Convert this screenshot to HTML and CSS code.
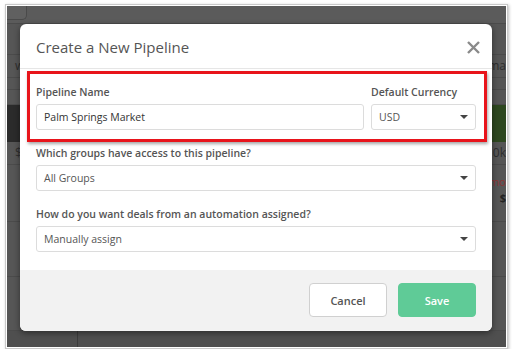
FILE: index.html
```html
<!DOCTYPE html>
<html lang="en">
<head>
    <meta charset="UTF-8">
    <meta name="viewport" content="width=device-width, initial-scale=1.0">
    <title>Create a New Pipeline</title>
    <link rel="stylesheet" href="styles.css">
</head>
<body>
    <div class="shot">
        <div class="backdrop">
            <div class="bg-row bg-top"><span class="bg-tab"></span></div>
            <div class="bg-row bg-b"></div>
            <div class="bg-row bg-c"><span>wn</span><span>ma</span></div>
            <div class="bg-row bg-d"></div>
            <div class="bg-row bg-e"></div>
            <div class="bg-row bg-band"><span class="band-dark"></span><span class="band-green"></span></div>
            <div class="bg-row bg-f"><span>$3</span><span>0k</span></div>
            <div class="bg-row plain bg-g1"></div>
            <div class="bg-row plain bg-g2"><span></span><span class="bg-red">mo</span></div>
            <div class="bg-row plain bg-g3"><span></span><span class="bg-bold">$</span></div>
            <div class="bg-row bg-g4"></div>
            <div class="bg-row bg-h"></div>
            <div class="bg-row bg-i"></div>
            <div class="bg-row bg-bottom"><span class="bg-divider"></span></div>

            <div class="modal">
                <div class="modal-header">
                    <h1>Create a New Pipeline</h1>
                    <button class="close-btn" aria-label="Close">
                        <svg width="13" height="13" viewBox="0 0 13 13">
                            <path d="M1 1 L12 12 M12 1 L1 12" stroke="#8a8a8a" stroke-width="2.4" stroke-linecap="butt"/>
                        </svg>
                    </button>
                </div>

                <div class="modal-body">
                    <div class="field-row">
                        <div class="field grow">
                            <label>Pipeline Name</label>
                            <div class="input">Palm Springs Market</div>
                        </div>
                        <div class="field currency">
                            <label>Default Currency</label>
                            <div class="input select">USD <span class="caret"></span></div>
                        </div>
                    </div>

                    <div class="field">
                        <label>Which groups have access to this pipeline?</label>
                        <div class="input select">All Groups <span class="caret"></span></div>
                    </div>

                    <div class="field">
                        <label>How do you want deals from an automation assigned?</label>
                        <div class="input select">Manually assign <span class="caret"></span></div>
                    </div>
                </div>

                <div class="modal-footer">
                    <button class="btn btn-cancel">Cancel</button>
                    <button class="btn btn-save">Save</button>
                </div>

                <div class="highlight"></div>
            </div>
        </div>
    </div>
</body>
</html>
```

FILE: styles.css
```css
* {
    margin: 0;
    padding: 0;
    box-sizing: border-box;
}

body {
    background: #ffffff;
    font-family: 'Open Sans', 'Noto Sans', sans-serif;
}

/* screenshot frame */
.shot {
    margin: 4px 0 0 5px;
    width: 503px;
    padding: 1px;
    background: #ffffff;
    border: 1px solid #c9c9c9;
    box-shadow: 1px 1px 3px rgba(0, 0, 0, 0.25);
}

.backdrop {
    position: relative;
    width: 499px;
    height: 341px;
    background: #565656;
    display: flex;
    flex-direction: column;
    overflow: hidden;
}

.bg-row {
    display: flex;
    justify-content: space-between;
    align-items: center;
    border-bottom: 1px solid #4b4b4b;
    font-size: 12px;
    line-height: 14px;
    color: #2e2e2e;
    padding: 0 0 0 8px;
    flex-shrink: 0;
}

.bg-row.plain { border-bottom: none; font-size: 11px; }

.bg-top { height: 18px; background: #5b5b5b; padding: 0; align-items: flex-start; }
.bg-tab {
    width: 20px;
    height: 14px;
    border: 1px solid #4a4a4a;
    border-top: none;
    border-left: none;
    border-radius: 0 0 5px 0;
    background: #606060;
}
.bg-b { height: 31px; }
.bg-c { height: 23px; }
.bg-d { height: 12px; }
.bg-e { height: 15px; }
.bg-band { height: 37px; padding: 0; border: none; }
.band-dark { width: 250px; height: 100%; background: #2b2b2b; }
.band-green { width: 249px; height: 100%; background: #2e4820; }
.bg-f { height: 23px; }
.bg-g1 { height: 9px; }
.bg-g2 { height: 16px; }
.bg-g3 { height: 16px; }
.bg-g4 { height: 16px; }
.bg-red { color: #8a3434; }
.bg-bold { color: #222222; font-weight: 700; }
.bg-h { height: 55px; }
.bg-i { height: 54px; }
.bg-bottom { height: 16px; padding: 0 0 0 70px; background: #4f4f4f; border: none; }
.bg-divider { width: 1px; height: 100%; background: #3c3c3c; }

/* modal */
.modal {
    position: absolute;
    left: 13px;
    top: 18px;
    width: 472px;
    height: 307px;
    background: #ffffff;
    border-radius: 6px;
    box-shadow: 0 2px 6px rgba(0, 0, 0, 0.45);
    display: flex;
    flex-direction: column;
    overflow: hidden;
}

.modal-header {
    height: 45px;
    display: flex;
    align-items: center;
    justify-content: space-between;
    padding: 0 12px 0 16px;
    border-bottom: 1px solid #e6e6e6;
    flex-shrink: 0;
}

.modal-header h1 {
    font-size: 15px;
    font-weight: 400;
    color: #555555;
    margin-top: 2px;
}

.close-btn {
    background: none;
    border: none;
    width: 13px;
    height: 13px;
    display: flex;
    margin-top: 3px;
}

.modal-body {
    padding: 16px 16px 0;
    flex: 1;
    display: flex;
    flex-direction: column;
    gap: 16px;
}

.field-row {
    display: flex;
    gap: 7px;
}

.field {
    display: flex;
    flex-direction: column;
    gap: 4px;
}

.field.grow { flex: 1; }
.field.currency { width: 105px; }

.field label {
    font-size: 10.5px;
    font-weight: 600;
    color: #555555;
    line-height: 15px;
}

.input {
    height: 26px;
    border: 1px solid #dcdcdc;
    border-radius: 3px;
    padding: 0 7px;
    font-size: 10.5px;
    color: #333333;
    display: flex;
    align-items: center;
    background: #ffffff;
}

.select {
    justify-content: space-between;
    color: #555555;
    padding-right: 7px;
}

.caret {
    width: 0;
    height: 0;
    border-left: 4px solid transparent;
    border-right: 4px solid transparent;
    border-top: 4px solid #444444;
}

.modal-footer {
    height: 61px;
    background: #f2f2f2;
    display: flex;
    justify-content: flex-end;
    align-items: center;
    gap: 11px;
    padding: 0 16px 1px;
    flex-shrink: 0;
}

.btn {
    width: 78px;
    height: 34px;
    border-radius: 4px;
    font-family: inherit;
    font-size: 11px;
    font-weight: 600;
}

.btn-cancel {
    background: #ffffff;
    border: 1px solid #d0d0d0;
    color: #555555;
}

.btn-save {
    background: #5fcb97;
    border: 1px solid #5fcb97;
    color: #ffffff;
}

/* annotation box */
.highlight {
    position: absolute;
    left: 7px;
    top: 47px;
    width: 460px;
    height: 71px;
    border: 3px solid #e8141b;
    box-shadow: 1px 2px 3px rgba(0, 0, 0, 0.35);
}
```
